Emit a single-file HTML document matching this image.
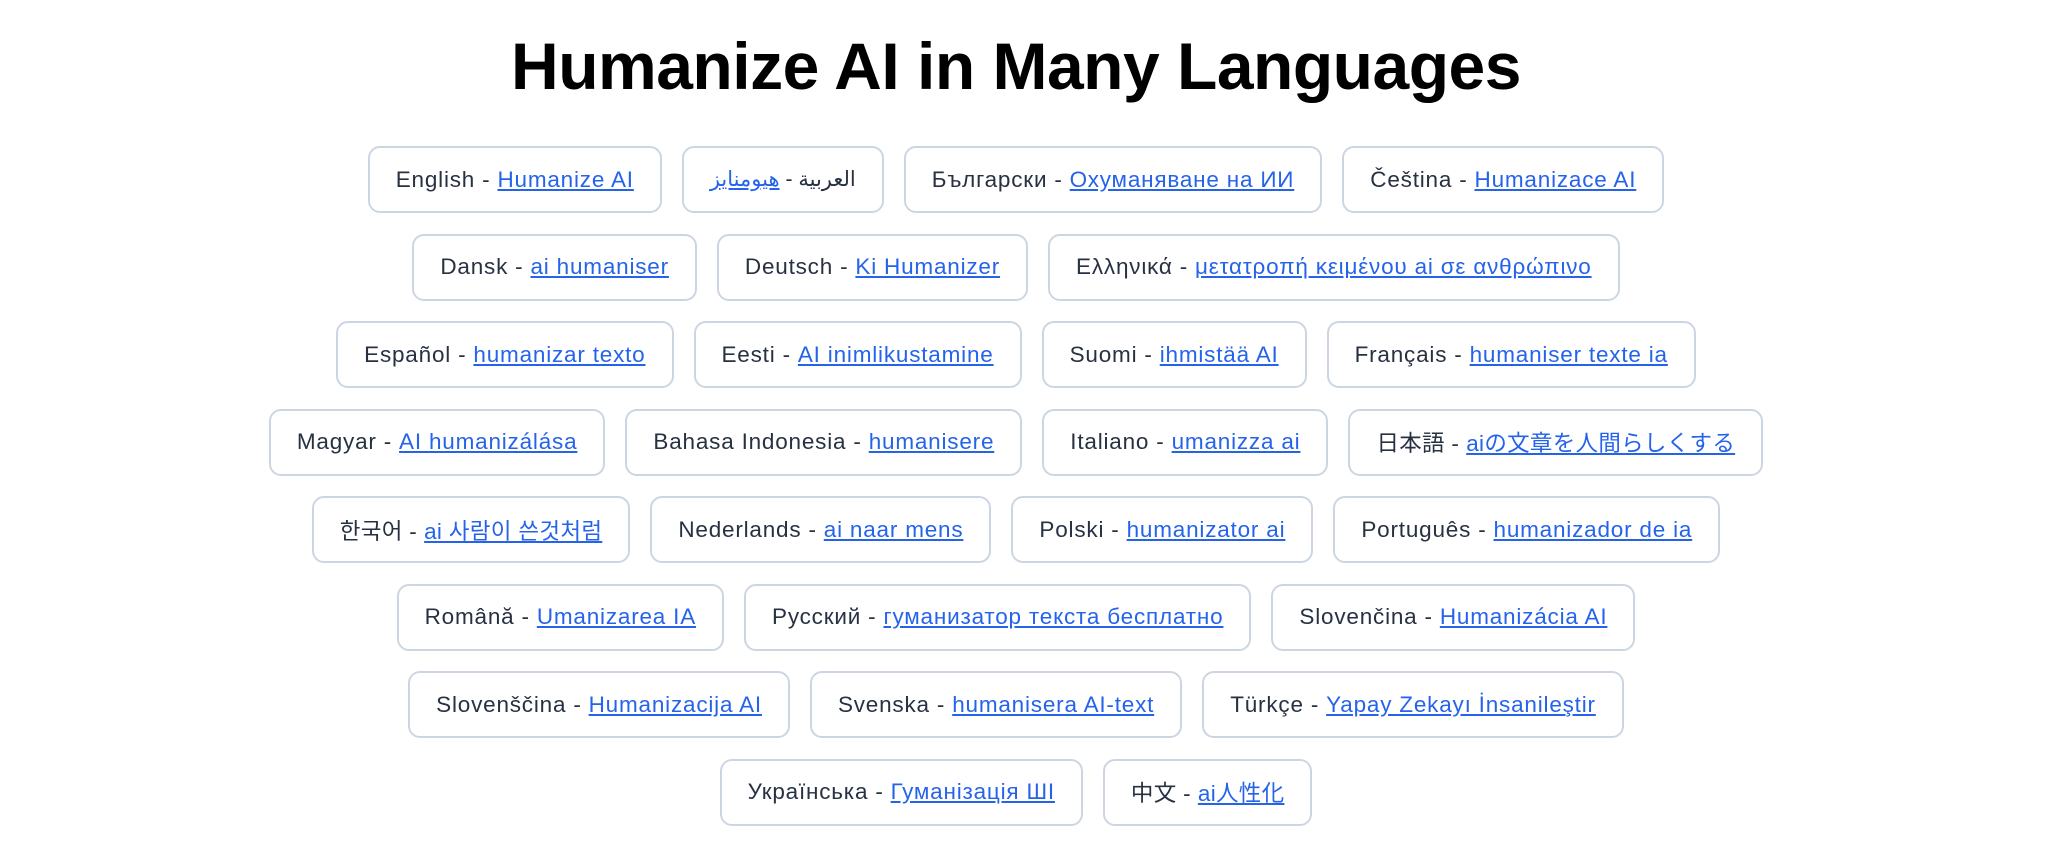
<!DOCTYPE html>
<html><head><meta charset="utf-8"><style>
body{margin:0;background:#fff;width:2048px;height:859px;overflow:hidden;font-family:"Liberation Sans","Noto Sans CJK JP",sans-serif;}
h1{margin:0;position:absolute;top:28px;left:-8px;width:2048px;text-align:center;font-size:66px;font-weight:bold;color:#000;letter-spacing:-0.5px;}
.wrap{position:absolute;top:146px;left:-8px;width:2048px;}
.row{display:flex;justify-content:center;gap:20px;height:67px;margin-bottom:20.5px;}
.b{box-sizing:border-box;height:67px;border:2px solid #ccd6e3;border-radius:12px;padding:0 26px;display:flex;align-items:center;font-size:22.5px;letter-spacing:0.8px;color:#273142;white-space:nowrap;}
.b a{color:#2563eb;text-decoration:underline;margin-left:7px;}
</style></head><body>
<h1>Humanize AI in Many Languages</h1>
<div class="wrap">
<div class="row"><div class="b">English -<a>Humanize AI</a></div><div class="b" dir="rtl" style="letter-spacing:0;font-size:21px">العربية -<a style="margin-left:0;margin-right:6px">هيومنايز</a></div><div class="b">Български -<a>Охуманяване на ИИ</a></div><div class="b">Čeština -<a>Humanizace AI</a></div></div>
<div class="row"><div class="b">Dansk -<a>ai humaniser</a></div><div class="b">Deutsch -<a>Ki Humanizer</a></div><div class="b">Ελληνικά -<a>μετατροπή κειμένου ai σε ανθρώπινο</a></div></div>
<div class="row"><div class="b">Español -<a>humanizar texto</a></div><div class="b">Eesti -<a>AI inimlikustamine</a></div><div class="b">Suomi -<a>ihmistää AI</a></div><div class="b">Français -<a>humaniser texte ia</a></div></div>
<div class="row"><div class="b">Magyar -<a>AI humanizálása</a></div><div class="b">Bahasa Indonesia -<a>humanisere</a></div><div class="b">Italiano -<a>umanizza ai</a></div><div class="b" style="letter-spacing:0.3px">日本語 -<a>aiの文章を人間らしくする</a></div></div>
<div class="row"><div class="b" style="letter-spacing:0.3px">한국어 -<a>ai 사람이 쓴것처럼</a></div><div class="b">Nederlands -<a>ai naar mens</a></div><div class="b">Polski -<a>humanizator ai</a></div><div class="b">Português -<a>humanizador de ia</a></div></div>
<div class="row"><div class="b">Română -<a>Umanizarea IA</a></div><div class="b">Русский -<a>гуманизатор текста бесплатно</a></div><div class="b">Slovenčina -<a>Humanizácia AI</a></div></div>
<div class="row"><div class="b">Slovenščina -<a>Humanizacija AI</a></div><div class="b">Svenska -<a>humanisera AI-text</a></div><div class="b">Türkçe -<a>Yapay Zekayı İnsanileştir</a></div></div>
<div class="row"><div class="b">Українська -<a>Гуманізація ШІ</a></div><div class="b" style="letter-spacing:0.3px">中文 -<a>ai人性化</a></div></div>
</div>
</body></html>
